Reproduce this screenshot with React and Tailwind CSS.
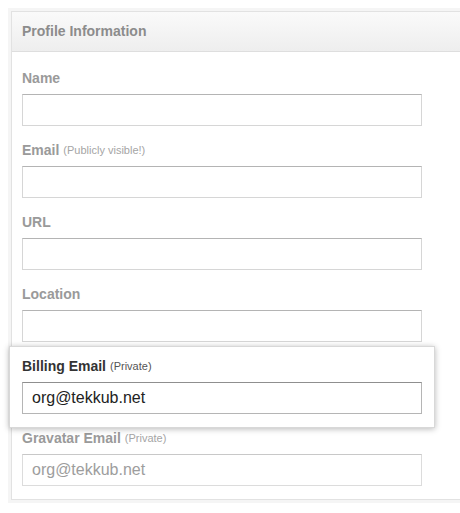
import React from "react";

const font = { fontFamily: '"Liberation Sans", Arial, Helvetica, sans-serif' };

function Field({ label, hint, value, muted, highlight, first }) {
  const labelColor = highlight ? "text-[#333]" : "text-[#9a9a9a]";
  const hintColor = highlight ? "text-[#555]" : "text-[#a5a5a5]";
  const inputCls = highlight
    ? "border border-[#b5b5b5] border-t-[#8f8f8f] text-[#222]"
    : muted
    ? "border border-[#dcdcdc] border-t-[#c8c8c8] text-[#9d9d9d]"
    : "border border-[#d6d6d6] border-t-[#b4b4b4] text-[#222]";
  const wrap = highlight
    ? "mt-[4px] -ml-[13px] w-[426px] pt-[9px] pl-[12px] pr-[12px] pb-[13px] bg-white border border-[#d8d8d8] shadow-[0_1px_6px_rgba(0,0,0,0.28)] relative z-10"
    : first
    ? ""
    : "mt-[14px]";
  return (
    <div className={wrap}>
      <div className="h-[20px] flex items-center gap-[4px] mb-[6px]">
        <span className={`text-[14px] font-bold ${labelColor}`}>{label}</span>
        {hint && <span className={`text-[11px] ${hintColor}`}>{hint}</span>}
      </div>
      <div
        className={`w-[400px] h-[32px] bg-white flex items-center pl-[9px] text-[16px] ${inputCls}`}
      >
        {value}
      </div>
    </div>
  );
}

export default function App() {
  return (
    <div className="w-[460px] h-[513px] overflow-hidden bg-white" style={font}>
      <div className="ml-[8px] mt-[8px] w-[470px] bg-[#f5f5f5] pt-[3px] pl-[3px] pb-[3px]">
        <div className="bg-white border border-[#e2e2e2]">
          <div className="h-[40px] flex items-center pl-[10px] bg-gradient-to-b from-[#fafafa] to-[#eeeeee] border-b border-[#dedede]">
            <span className="text-[14px] font-bold text-[#8c8c8c]">Profile Information</span>
          </div>
          <div className="pl-[10px] pt-[16px] pb-[13px]">
            <Field label="Name" first />
            <Field label="Email" hint="(Publicly visible!)" />
            <Field label="URL" />
            <Field label="Location" />
            <Field label="Billing Email" hint="(Private)" value="org@tekkub.net" highlight />
            <Field label="Gravatar Email" hint="(Private)" value="org@tekkub.net" muted first />
          </div>
        </div>
      </div>
    </div>
  );
}
